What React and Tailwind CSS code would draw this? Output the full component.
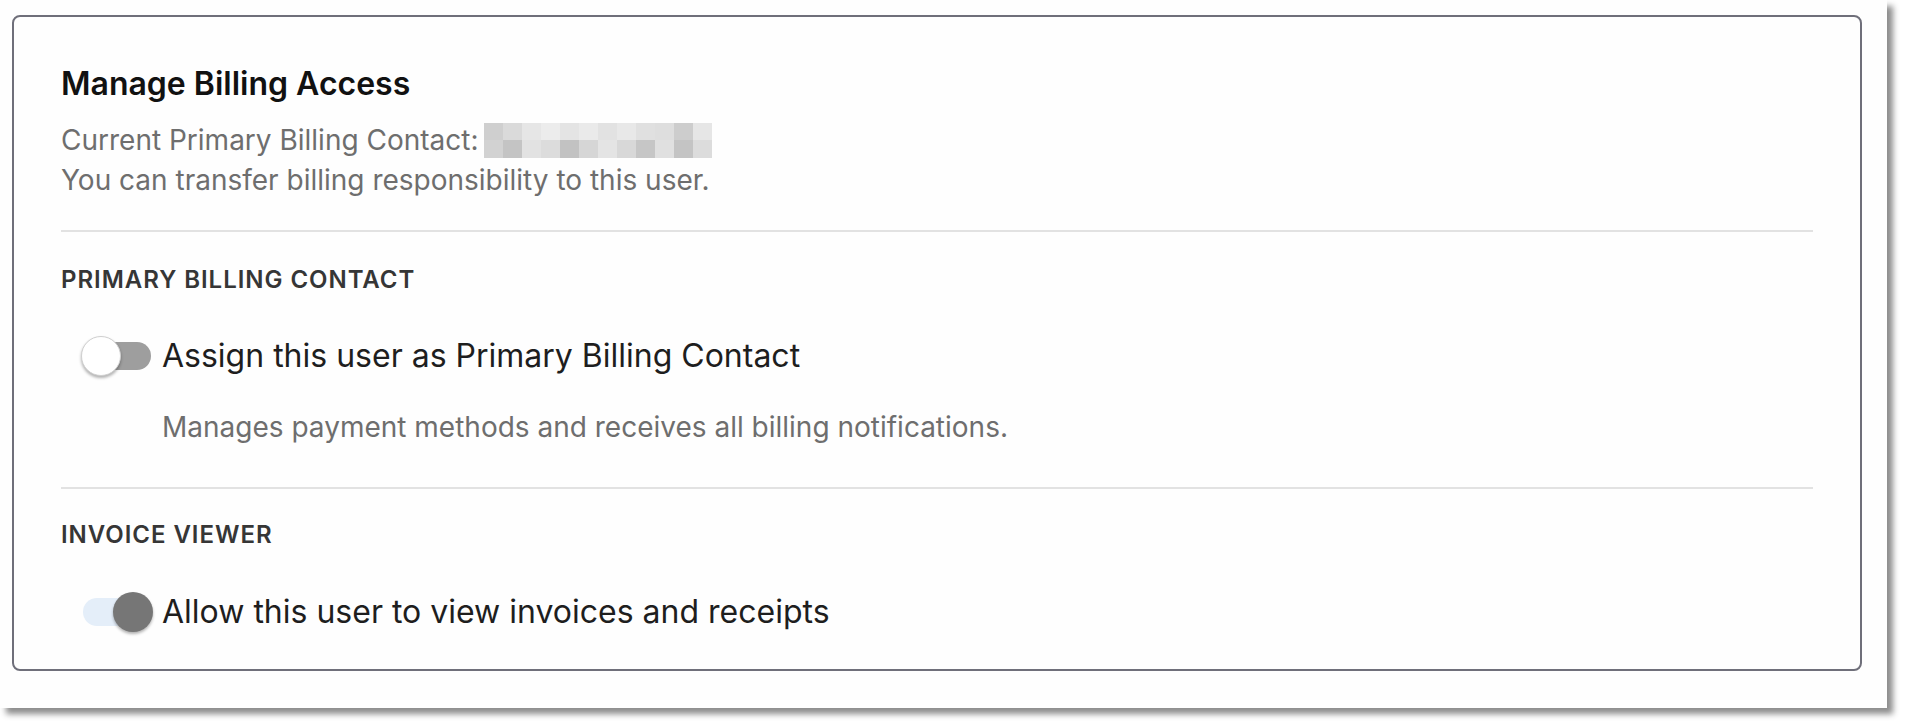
import React from "react";

const topRow = ["#cfcfcf", "#dadada", "#e6e6e6", "#ececec", "#e4e4e4", "#eaeaea", "#e2e2e2", "#e8e8e8", "#e0e0e0", "#dedede", "#cdcdcd", "#e6e6e6"];
const bottomRow = ["#d2d2d2", "#c4c4c4", "#e2e2e2", "#dcdcdc", "#c2c2c2", "#d6d6d6", "#e4e4e4", "#d8d8d8", "#c6c6c6", "#e0e0e0", "#c4c4c4", "#dcdcdc"];

function Redacted() {
  return (
    <span className="inline-grid grid-cols-12 w-[228px] h-[35px] align-middle ml-[5px]">
      {topRow.map((c, i) => (
        <span key={"t" + i} style={{ backgroundColor: c }} />
      ))}
      {bottomRow.map((c, i) => (
        <span key={"b" + i} style={{ backgroundColor: c }} />
      ))}
    </span>
  );
}

function Toggle({ on }) {
  return (
    <div className="relative w-[72px] h-[44px] flex items-center shrink-0">
      <div
        className={
          "absolute left-[2px] w-[68px] h-[28px] rounded-full " +
          (on ? "bg-[#e4eef9]" : "bg-[#9e9e9e]")
        }
      />
      <div
        className={
          "absolute w-[40px] h-[40px] rounded-full shadow-[0_2px_3px_rgba(0,0,0,0.3)] " +
          (on ? "left-[32px] bg-[#767676]" : "left-0 bg-white border border-[#d0d0d0]")
        }
      />
    </div>
  );
}

export default function App() {
  return (
    <div className="w-[1907px] h-[728px] bg-white font-['Inter',sans-serif]">
      <div className="w-[1887px] h-[708px] bg-[#fefefe] shadow-[6px_6px_6px_rgba(0,0,0,0.45)] pt-[15px] pl-[12px]">
        <div className="w-[1850px] h-[656px] border-2 border-[#6f6f7a] rounded-[8px] px-[47px] pt-[49px] flex flex-col">
          <h1 className="text-[32px] leading-[36px] font-semibold text-[#111111]">
            Manage Billing Access
          </h1>
          <div className="mt-[18px] text-[28px] leading-[40px] text-[#6e6e6e]">
            <div className="flex items-center">
              <span>Current Primary Billing Contact:</span>
              <Redacted />
            </div>
            <div>You can transfer billing responsibility to this user.</div>
          </div>
          <div className="mt-[30px] border-t-2 border-[#e2e2e2]" />
          <div className="mt-[34px] text-[24px] leading-[28px] font-semibold tracking-[0.04em] text-[#363636]">
            PRIMARY BILLING CONTACT
          </div>
          <div className="mt-[40px] flex items-center pl-[20px] gap-[9px] h-[44px]">
            <Toggle on={false} />
            <span className="text-[32px] leading-[44px] text-[#1e1e1e]">
              Assign this user as Primary Billing Contact
            </span>
          </div>
          <div className="mt-[33px] pl-[101px] text-[28px] leading-[32px] text-[#6e6e6e]">
            Manages payment methods and receives all billing notifications.
          </div>
          <div className="mt-[44px] border-t-2 border-[#e2e2e2]" />
          <div className="mt-[32px] text-[24px] leading-[28px] font-semibold tracking-[0.04em] text-[#363636]">
            INVOICE VIEWER
          </div>
          <div className="mt-[41px] flex items-center pl-[20px] gap-[9px] h-[44px]">
            <Toggle on={true} />
            <span className="text-[32px] leading-[44px] text-[#1e1e1e]">
              Allow this user to view invoices and receipts
            </span>
          </div>
        </div>
      </div>
    </div>
  );
}
